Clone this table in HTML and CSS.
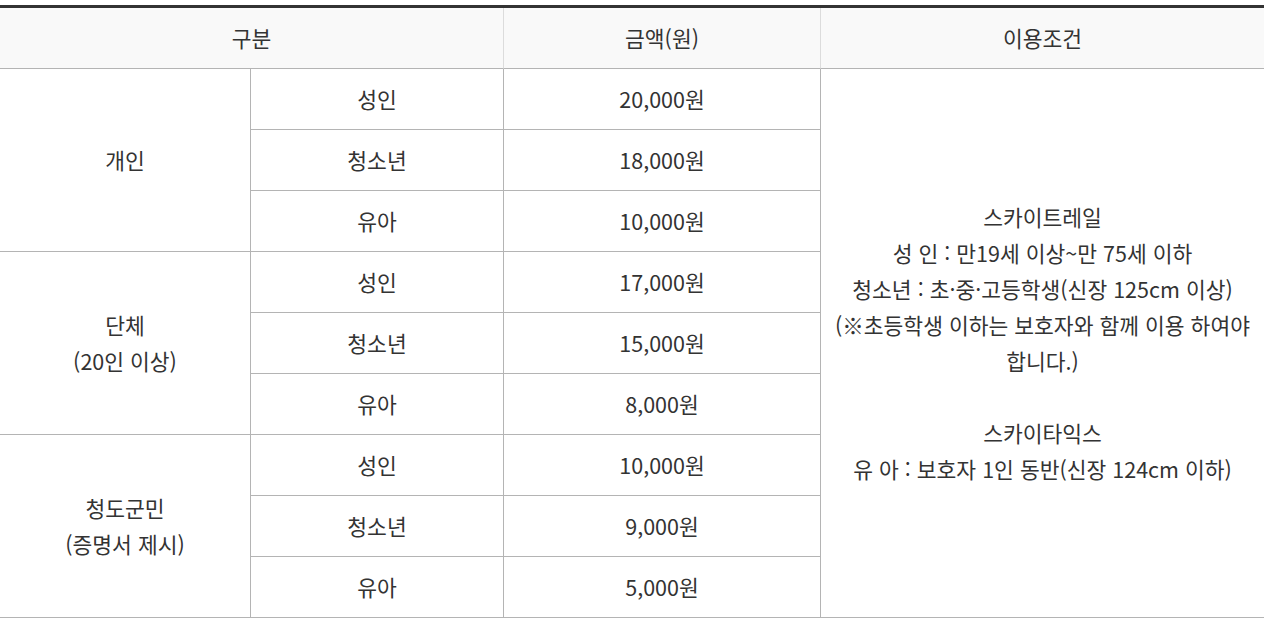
FILE: index.html
```html
<!DOCTYPE html>
<html lang="ko">
<head>
<meta charset="utf-8">
<title>요금 안내</title>
<link rel="stylesheet" href="styles.css">
</head>
<body>
<div class="fare">
  <div class="cell head span2">구분</div>
  <div class="cell head c3">금액(원)</div>
  <div class="cell head c4">이용조건</div>

  <div class="cell c1 g1">개인</div>
  <div class="cell c2">성인</div><div class="cell c3">20,000원</div>
  <div class="cell c4 cond">
    <p>스카이트레일</p>
    <p>성 인 : 만19세 이상~만 75세 이하</p>
    <p>청소년 : 초·중·고등학생(신장 125cm 이상)</p>
    <p>(※초등학생 이하는 보호자와 함께 이용 하여야 합니다.)</p>
    <p class="blank">&nbsp;</p>
    <p>스카이타익스</p>
    <p>유 아 : 보호자 1인 동반(신장 124cm 이하)</p>
  </div>
  <div class="cell c2">청소년</div><div class="cell c3">18,000원</div>
  <div class="cell c2">유아</div><div class="cell c3">10,000원</div>

  <div class="cell c1 g2">단체<br>(20인 이상)</div>
  <div class="cell c2">성인</div><div class="cell c3">17,000원</div>
  <div class="cell c2">청소년</div><div class="cell c3">15,000원</div>
  <div class="cell c2">유아</div><div class="cell c3">8,000원</div>

  <div class="cell c1 g3">청도군민<br>(증명서 제시)</div>
  <div class="cell c2">성인</div><div class="cell c3">10,000원</div>
  <div class="cell c2">청소년</div><div class="cell c3">9,000원</div>
  <div class="cell c2">유아</div><div class="cell c3">5,000원</div>
</div>
</body>
</html>
```
FILE: styles.css
```css
html, body {
  margin: 0;
  padding: 0;
  background: #fff;
}
body {
  padding-top: 5px;
  font-family: "Noto Sans CJK KR", "Noto Sans", sans-serif;
  font-size: 21.5px;
  color: #333;
}
.fare {
  width: 1264px;
  display: grid;
  grid-template-columns: 250px 253px 317px 444px;
  grid-template-rows: repeat(10, 61px);
  border-top: 3px solid #333;
}
.cell {
  display: flex;
  align-items: center;
  justify-content: center;
  text-align: center;
  border-bottom: 1px solid #b4b4b4;
  line-height: 36px;
  box-sizing: border-box;
  word-break: keep-all;
}
.head {
  background: #f9f9f9;
}
.head.c3, .head.c4 {
  border-left: 1px solid #dcdcdc;
}
.span2 { grid-column: 1 / 3; }
.c1 { grid-column: 1; }
.c2 { grid-column: 2; border-left: 1px solid #b4b4b4; }
.c3 { grid-column: 3; border-left: 1px solid #b4b4b4; }
.c4 { grid-column: 4; border-left: 1px solid #b4b4b4; }
.g1 { grid-row: 2 / 5; }
.g2 { grid-row: 5 / 8; }
.g3 { grid-row: 8 / 11; }
.cond {
  grid-row: 2 / 11;
  flex-direction: column;
  padding: 0 10px;
}
.cond p {
  margin: 0;
}
```
